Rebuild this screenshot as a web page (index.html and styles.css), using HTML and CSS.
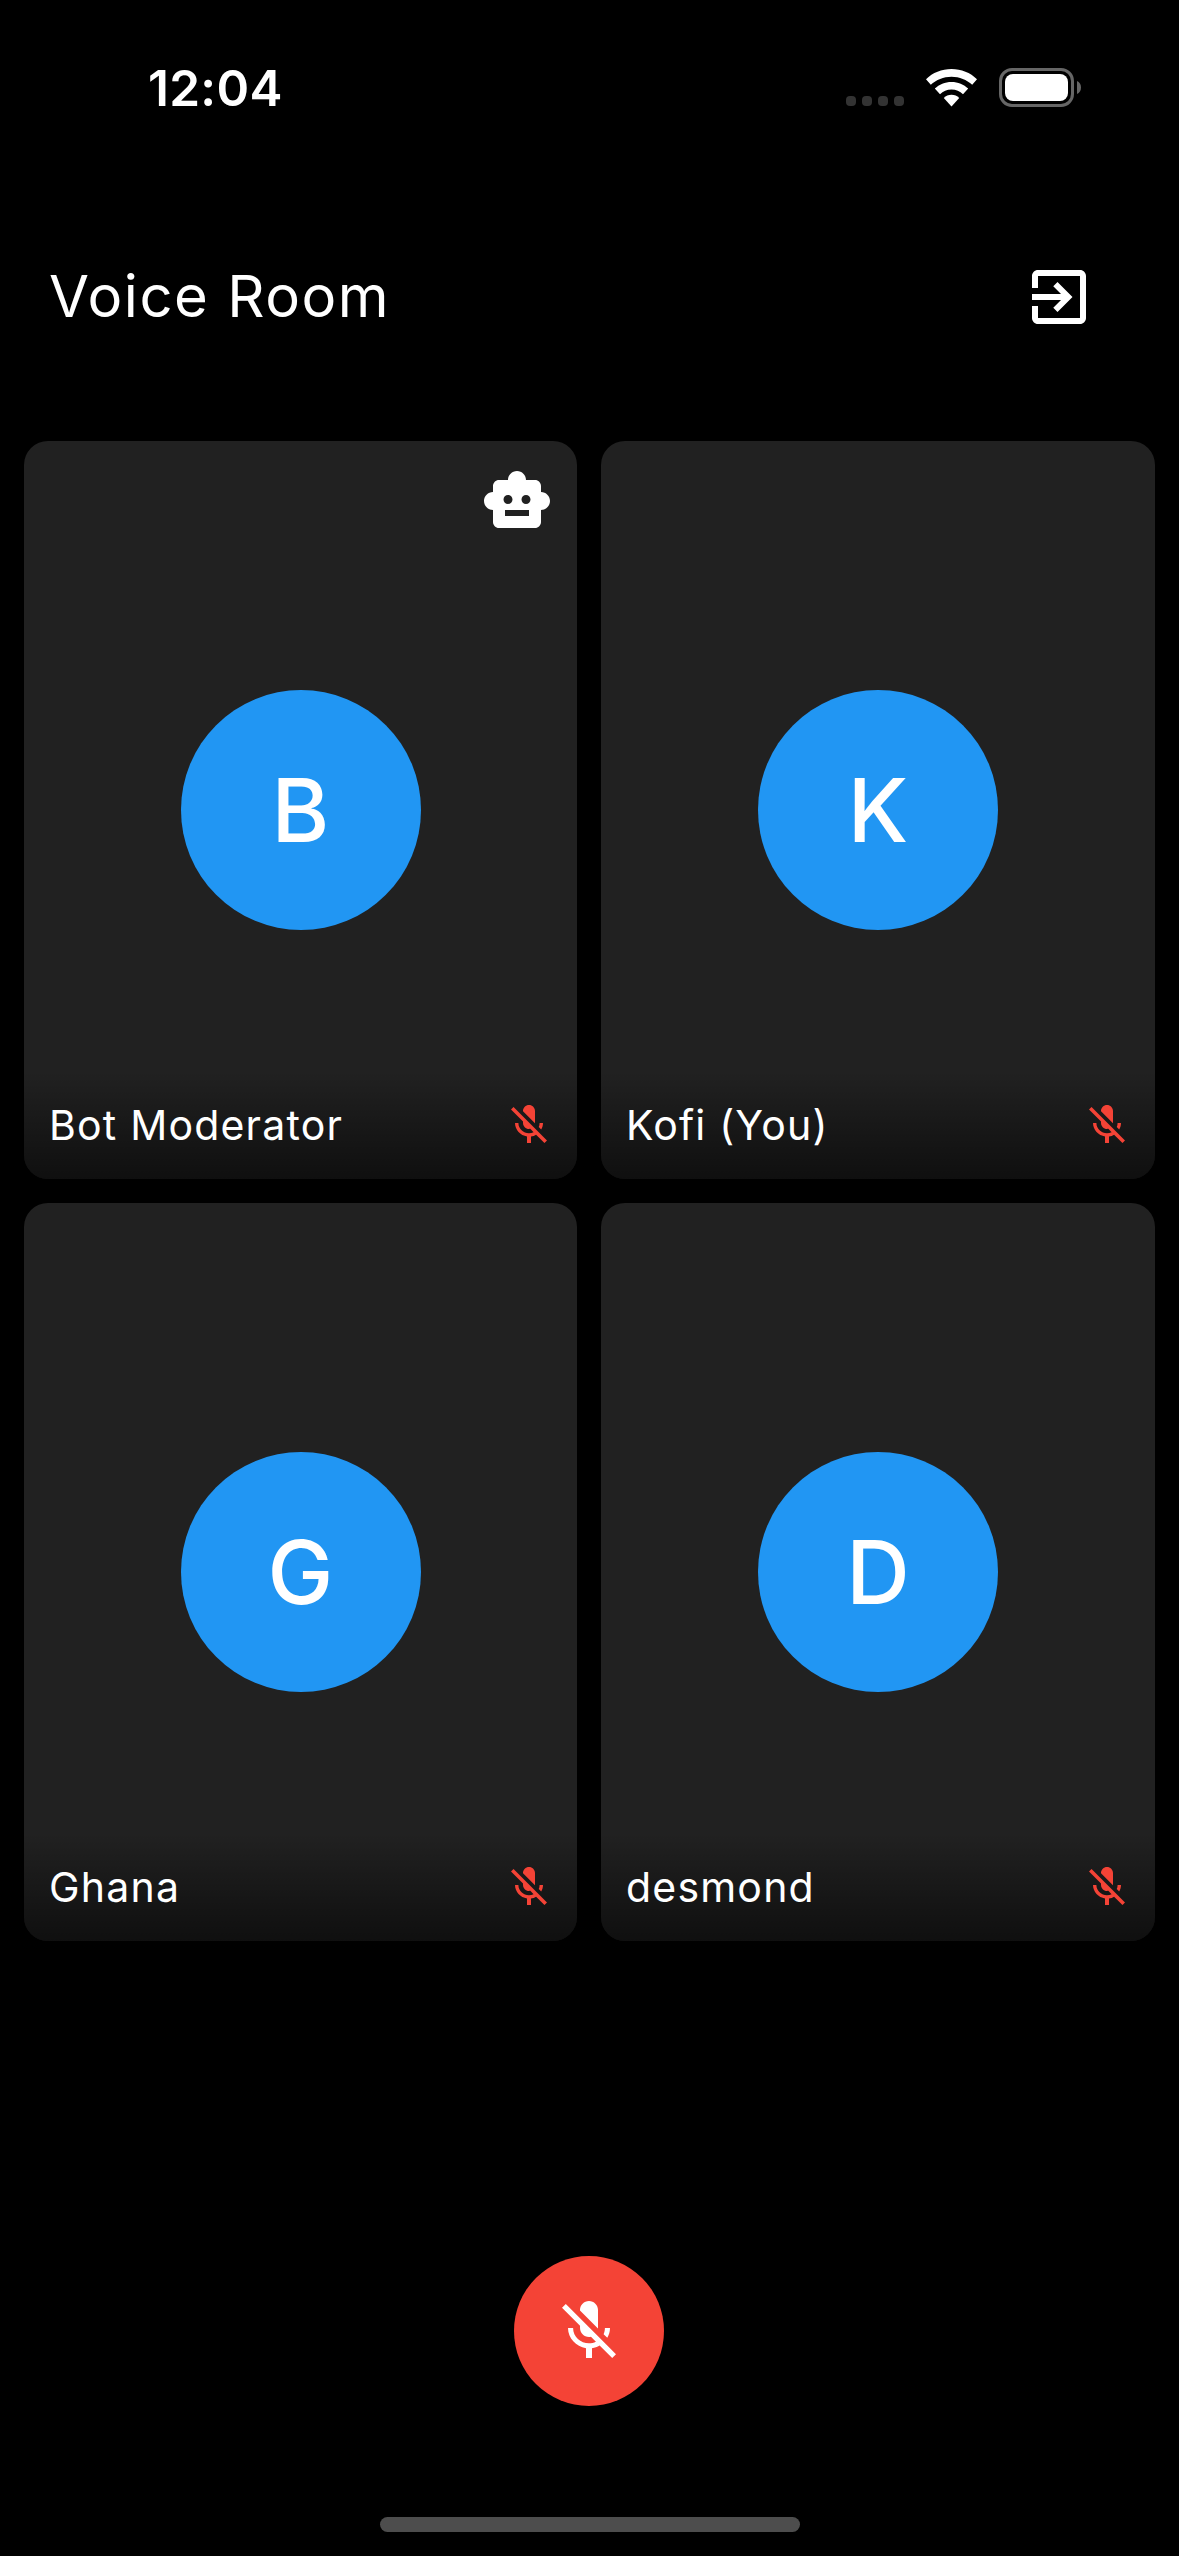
FILE: index.html
```html
<!DOCTYPE html>
<html lang="en">
<head>
<meta charset="utf-8">
<title>Voice Room</title>
<link rel="stylesheet" href="styles.css">
</head>
<body>
<svg class="sprite" aria-hidden="true">
  <symbol id="mic-off" viewBox="0 0 24 24"><path d="M19 11h-1.7c0 .74-.16 1.43-.43 2.05l1.23 1.23c.56-.98.9-2.09.9-3.28zm-4.02.17c0-.06.02-.11.02-.17V5c0-1.66-1.34-3-3-3S9 3.34 9 5v.18l5.98 5.99zM4.27 3L3 4.27l6.01 6.01V11c0 1.66 1.33 3 2.99 3 .22 0 .44-.03.65-.08l1.66 1.66c-.71.33-1.5.52-2.31.52-2.76 0-5.3-2.1-5.3-5.1H5c0 3.41 2.72 6.23 6 6.72V21h2v-3.28c.91-.13 1.77-.45 2.54-.9L19.73 21 21 19.73 4.27 3z"/></symbol>
</svg>
<div class="screen">
  <div class="status">
    <span class="time">12:04</span>
    <div class="indicators">
      <div class="dots"><i></i><i></i><i></i><i></i></div>
      <svg class="wifi" viewBox="0 0 51 38">
        <path d="M25.5 0C35.3 0 44.300 3.700 51 10.200L46.200 15.700C40.700 10.700 33.500 7.700 25.500 7.700S10.300 10.700 4.800 15.700L0 10.200C6.700 3.700 15.700 0 25.500 0z"/>
        <path d="M25.500 13C32 13 37.800 15.500 42.200 19.600L37 25.200C34 22.300 30 20.600 25.500 20.600S17 22.300 14 25.200L8.800 19.600C13.200 15.500 19 13 25.500 13z"/>
        <path d="M25.500 25.800C28.500 25.800 31.200 27 33.200 29L25.500 37.500L17.800 29C19.800 27 22.500 25.800 25.500 25.800z"/>
      </svg>
      <div class="battery">
        <div class="battery-case"><div class="battery-level"></div></div>
        <svg class="battery-cap" viewBox="0 0 4 13"><path d="M0 0C2.500 1 4 3.500 4 6.500S2.500 12 0 13z"/></svg>
      </div>
    </div>
  </div>

  <header class="header">
    <h1 class="title">Voice Room</h1>
    <svg class="icon" viewBox="0 0 24 24"><path d="M10.090 15.590L11.500 17l5-5-5-5-1.410 1.410L12.670 11H3v2h9.670l-2.580 2.590zM19 3H5c-1.110 0-2 .9-2 2v4h2V5h14v14H5v-4H3v4c0 1.100.89 2 2 2h14c1.100 0 2-.9 2-2V5c0-1.100-.9-2-2-2z"/></svg>
  </header>

  <main class="grid">
    <section class="card">
      <svg class="icon bot" viewBox="0 0 24 24"><path d="M20 9V7c0-1.100-.9-2-2-2h-3c0-1.660-1.340-3-3-3S9 3.340 9 5H6c-1.100 0-2 .9-2 2v2c-1.660 0-3 1.340-3 3s1.340 3 3 3v4c0 1.100.9 2 2 2h12c1.100 0 2-.9 2-2v-4c1.660 0 3-1.340 3-3s-1.340-3-3-3zM7.500 11.500c0-.83.67-1.500 1.500-1.500s1.500.67 1.500 1.500S9.830 13 9 13s-1.500-.67-1.500-1.500zM16 17H8v-2h8v2zm-1-4c-.83 0-1.500-.67-1.500-1.500S14.170 10 15 10s1.500.67 1.500 1.500S15.830 13 15 13z"/></svg>
      <div class="avatar">B</div>
      <div class="caption"><span>Bot Moderator</span><svg class="mic"><use href="#mic-off"/></svg></div>
    </section>
    <section class="card">
      <div class="avatar">K</div>
      <div class="caption"><span>Kofi (You)</span><svg class="mic"><use href="#mic-off"/></svg></div>
    </section>
    <section class="card">
      <div class="avatar">G</div>
      <div class="caption"><span>Ghana</span><svg class="mic"><use href="#mic-off"/></svg></div>
    </section>
    <section class="card">
      <div class="avatar">D</div>
      <div class="caption"><span>desmond</span><svg class="mic"><use href="#mic-off"/></svg></div>
    </section>
  </main>

  <footer class="footer">
    <button class="mute" aria-label="Unmute"><svg class="icon"><use href="#mic-off"/></svg></button>
    <div class="home-bar"></div>
  </footer>
</div>
</body>
</html>
```
FILE: styles.css
```css
* { box-sizing: border-box; }
body {
  margin: 0;
  background: #000;
  color: #fff;
  font-family: Inter, "Liberation Sans", sans-serif;
}
svg { display: block; fill: currentColor; flex: none; }
.sprite { display: none; }
.icon { width: 72px; height: 72px; }
.screen {
  width: 1179px;
  height: 2556px;
  display: flex;
  flex-direction: column;
}

/* Status bar */
.status {
  height: 177px;
  padding: 0 98px 1px 148px;
  display: flex;
  align-items: center;
  justify-content: space-between;
}
.time { font-size: 49.5px; font-weight: 600; letter-spacing: .3px; line-height: 60px; }
.indicators { display: flex; align-items: center; margin-bottom: 1px; }
.dots { display: flex; gap: 6px; align-self: flex-end; margin: 0 22px 1px 0; }
.dots i { width: 10px; height: 10px; border-radius: 4px; background: #333; }
.wifi { width: 51px; height: 38px; margin-right: 22px; }
.battery { display: flex; align-items: center; gap: 3px; color: #666; }
.battery-case {
  width: 75px;
  height: 39px;
  padding: 3px;
  border: 3px solid #666;
  border-radius: 13px;
}
.battery-level { height: 27px; border-radius: 8px; background: #fff; }
.battery-cap { width: 4px; height: 13px; }

/* Title row */
.header {
  height: 240px;
  padding: 0 84px 0 49px;
  display: flex;
  align-items: center;
  justify-content: space-between;
}
.title { margin: 0 0 2px; font-size: 58px; font-weight: 400; letter-spacing: 1.5px; line-height: 72px; }

/* Participants */
.grid {
  padding: 24px;
  display: grid;
  grid-template-columns: 553px 554px;
  grid-auto-rows: 738px;
  gap: 24px;
}
.card {
  position: relative;
  display: grid;
  grid-template-rows: 1fr 240px 1fr;
  justify-items: center;
  border-radius: 24px;
  background: #212121;
  overflow: hidden;
}
.bot { position: absolute; top: 24px; right: 24px; }
.avatar {
  grid-row: 2;
  width: 240px;
  border-radius: 50%;
  background: #2196f3;
  font-size: 88px;
  font-weight: 500;
  line-height: 240px;
  text-align: center;
}
.caption {
  grid-row: 3;
  align-self: end;
  width: 100%;
  height: 108px;
  padding: 0 24px 0 25px;
  display: flex;
  align-items: center;
  justify-content: space-between;
  background: linear-gradient(transparent, rgba(0, 0, 0, .54));
  font-size: 41px;
  letter-spacing: 1.2px;
}
.mic { width: 48px; height: 48px; color: #f44336; }

/* Call controls */
.footer {
  flex: 1;
  padding-bottom: 24px;
  display: flex;
  flex-direction: column;
  align-items: center;
  justify-content: flex-end;
  gap: 111px;
}
.mute {
  width: 150px;
  height: 150px;
  margin-right: 1px;
  padding: 0;
  display: grid;
  place-items: center;
  border: 0;
  border-radius: 50%;
  background: #f44336;
  color: #fff;
}
.home-bar { width: 420px; height: 15px; border-radius: 7.5px; background: #4d4d4d; }
```
